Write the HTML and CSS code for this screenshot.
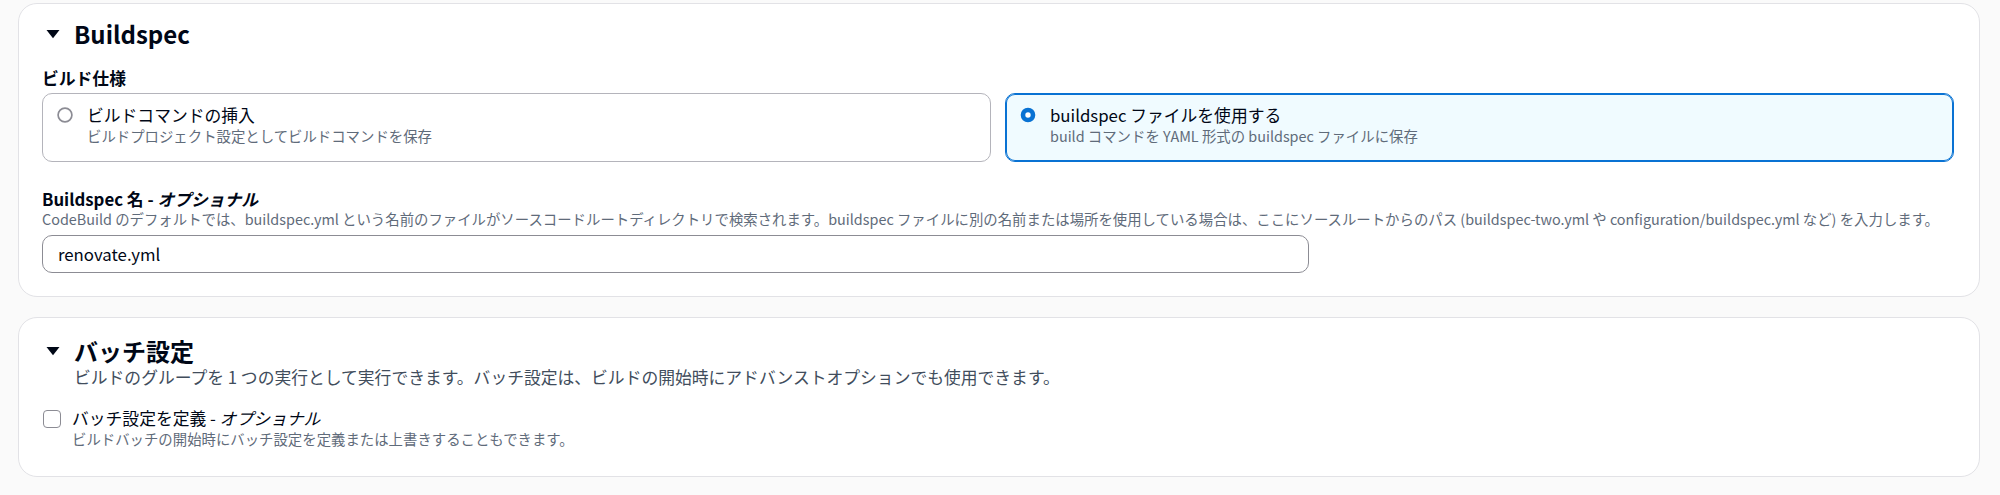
FILE: index.html
```html
<!DOCTYPE html>
<html lang="ja">
<head>
    <meta charset="UTF-8">
    <title>Buildspec</title>
    <link rel="stylesheet" href="styles.css">
</head>
<body>
    <div class="page">
        <section class="card">
            <h2 class="card-title">
                <svg class="caret" viewBox="0 0 14 14"><path d="M0.5 3h13L7 11.2z"/></svg>
                <span>Buildspec</span>
            </h2>
            <div class="field">
                <div class="label label-lg">ビルド仕様</div>
                <div class="tiles">
                    <div class="tile">
                        <svg class="radio" viewBox="0 0 16 16"><circle cx="8" cy="8" r="6.9" fill="#fff" stroke="#8c8c94" stroke-width="1.7"/></svg>
                        <div class="tile-text">
                            <div class="tile-label">ビルドコマンドの挿入</div>
                            <div class="tile-desc">ビルドプロジェクト設定としてビルドコマンドを保存</div>
                        </div>
                    </div>
                    <div class="tile selected">
                        <svg class="radio" viewBox="0 0 16 16"><circle cx="8" cy="8" r="5" fill="#fff" stroke="#0972d3" stroke-width="4.6"/></svg>
                        <div class="tile-text">
                            <div class="tile-label">buildspec ファイルを使用する</div>
                            <div class="tile-desc">build コマンドを YAML 形式の buildspec ファイルに保存</div>
                        </div>
                    </div>
                </div>
            </div>
            <div class="field field-name">
                <div class="label">Buildspec 名 - <i>オプショナル</i></div>
                <div class="field-desc">CodeBuild のデフォルトでは、buildspec.yml という名前のファイルがソースコードルートディレクトリで検索されます。buildspec ファイルに別の名前または場所を使用している場合は、ここにソースルートからのパス (buildspec-two.yml や configuration/buildspec.yml など) を入力します。</div>
                <input class="input" type="text" value="renovate.yml">
            </div>
        </section>

        <section class="card card-batch">
            <h2 class="card-title">
                <svg class="caret" viewBox="0 0 14 14"><path d="M0.5 3h13L7 11.2z"/></svg>
                <span>バッチ設定</span>
            </h2>
            <p class="card-desc">ビルドのグループを 1 つの実行として実行できます。バッチ設定は、ビルドの開始時にアドバンストオプションでも使用できます。</p>
            <div class="check">
                <span class="checkbox"></span>
                <div>
                    <div class="check-label">バッチ設定を定義 - <i>オプショナル</i></div>
                    <div class="check-desc">ビルドバッチの開始時にバッチ設定を定義または上書きすることもできます。</div>
                </div>
            </div>
        </section>
    </div>
</body>
</html>
```

FILE: styles.css
```css
* { margin: 0; padding: 0; box-sizing: border-box; }

body {
    background: #fafafa;
    color: #000716;
    font-family: "Noto Sans CJK JP", "Noto Sans", sans-serif;
    font-size: 16.8px;
}

i { font-style: italic; }

.page {
    display: flex;
    flex-direction: column;
    gap: 20px;
    padding: 3px 20px 0 18px;
}

.card {
    background: #fff;
    border: 1px solid #e2e2e6;
    border-radius: 19px;
    padding: 16px 24px 23px 23px;
}

.card-batch { padding-top: 19px; padding-bottom: 28px; }

.card-title {
    display: flex;
    align-items: center;
    gap: 14px;
    font-size: 24px;
    line-height: 28px;
    font-weight: 700;
}

.caret {
    width: 14px;
    height: 14px;
    fill: #000716;
    margin-left: 4px;
    flex: none;
}

.field { margin-top: 18px; }
.field-name { margin-top: 26px; }

.label {
    font-weight: 700;
    line-height: 22px;
}

.label-lg { line-height: 24px; }

.tiles {
    display: grid;
    grid-template-columns: 1fr 1fr;
    gap: 14px;
    margin-top: 3px;
    padding-right: 1px;
}

.tile {
    display: flex;
    align-items: flex-start;
    gap: 14px;
    height: 69px;
    padding: 9px 15px 0 14px;
    border: 1px solid #b4b4bb;
    border-radius: 10px;
}

.tile.selected {
    border-color: #0972d3;
    box-shadow: inset 0 0 0 1px #0972d3;
    background: #f0fbff;
}

.radio {
    width: 16px;
    height: 16px;
    margin-top: 4px;
    flex: none;
}

.tile-label { line-height: 24px; }

.tile-desc,
.field-desc,
.check-desc {
    font-size: 14.4px;
    line-height: 18px;
    color: #5f6b7a;
}

.field-desc { margin-bottom: 7px; white-space: nowrap; }

.input {
    display: block;
    width: 1267px;
    height: 38px;
    padding: 0 15px;
    border: 1px solid #8c8c94;
    border-radius: 10px;
    font: inherit;
    color: #000716;
    background: #fff;
    outline: none;
}

.card-desc {
    margin-left: 32px;
    line-height: 24px;
    color: #414d5c;
}

.check {
    display: flex;
    align-items: flex-start;
    gap: 11px;
    margin-top: 17px;
}

.checkbox {
    width: 18px;
    height: 18px;
    margin-top: 4px;
    margin-left: 1px;
    border: 1.5px solid #8c8c94;
    border-radius: 4px;
    background: #fff;
    flex: none;
}

.check-label { line-height: 24px; }
```
